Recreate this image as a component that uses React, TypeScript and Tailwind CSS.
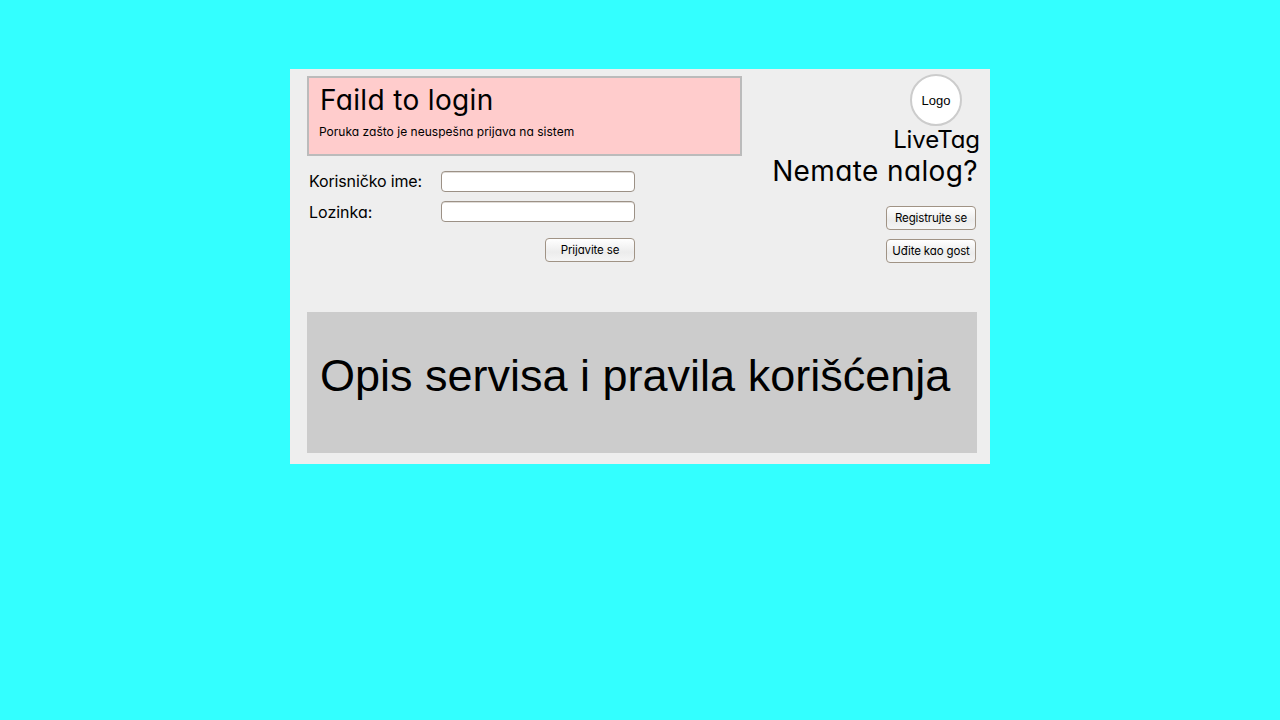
const geo = "font-['Inter',sans-serif] [font-feature-settings:'cv11'] whitespace-nowrap";
const button =
  "flex h-6 w-[90px] items-center justify-center rounded-[4px] border border-[#a09385] bg-linear-to-b from-white via-[#ececec] via-60% to-[#f5f5f5] pt-0.5 text-[11.5px] tracking-[-0.14px] text-black leading-none";
const input =
  "block h-[21px] w-[194px] rounded-[4px] border border-[#9c9186] bg-white px-1 text-xs outline-none shadow-[inset_0_1px_0_#e0dcd8]";

export default function App() {
  return (
    <div className="min-h-screen bg-[#33ffff] pt-[69px] text-black">
      <main className={`mx-auto h-[395px] w-[700px] bg-[#eeeeee] pl-[17px] ${geo}`}>
        <div className="flex h-[243px] justify-between">
          <section className="w-[435px] pt-[7px]">
            <div className="h-20 border-2 border-[#bbbbbb] bg-[#ffcccc] pt-[5px] pl-[10px]">
              <h1 className="pl-px text-[28px] leading-[34px] tracking-[0.34px]">Faild to login</h1>
              <p className="mt-[7px] text-[12px] leading-4 tracking-[0.02px]">Poruka zašto je neuspešna prijava na sistem</p>
            </div>
            <form className="mt-[15px] flex w-[328px] flex-col">
              <label className="flex h-[21px] items-center justify-between pl-0.5 text-[16px] leading-5 tracking-[-0.14px]">
                <span className="pb-0.5">Korisničko ime:</span>
                <input className={input} />
              </label>
              <label className="mt-[9px] flex h-[21px] items-center justify-between pl-0.5 text-[16px]">
                Lozinka:
                <input type="password" className={input} />
              </label>
              <button type="button" className={`mt-4 self-end ${button}`}>Prijavite se</button>
            </form>
          </section>
          <aside className="flex flex-col items-end pt-[5px] pr-[14px]">
            <div className="mr-[14px] flex size-[52px] items-center justify-center rounded-full border-2 border-[#cccccc] bg-white pt-0.5 font-['Liberation_Sans',sans-serif] text-[13px]">Logo</div>
            <div className="-mr-1 text-[24px] leading-[28px] tracking-[-0.1px]">LiveTag</div>
            <h2 className="-mr-0.5 pt-px text-[28px] leading-[33px] tracking-[0.38px]">Nemate nalog?</h2>
            <button type="button" className={`mt-[18px] ${button}`}>Registrujte se</button>
            <button type="button" className={`mt-[9px] ${button}`}>Uđite kao gost</button>
          </aside>
        </div>
        <section className="flex h-[141px] w-[670px] items-center bg-[#cccccc] pb-[14px] pl-[13px] font-['Liberation_Sans',sans-serif] text-[45px]">Opis servisa i pravila korišćenja</section>
      </main>
    </div>
  );
}
